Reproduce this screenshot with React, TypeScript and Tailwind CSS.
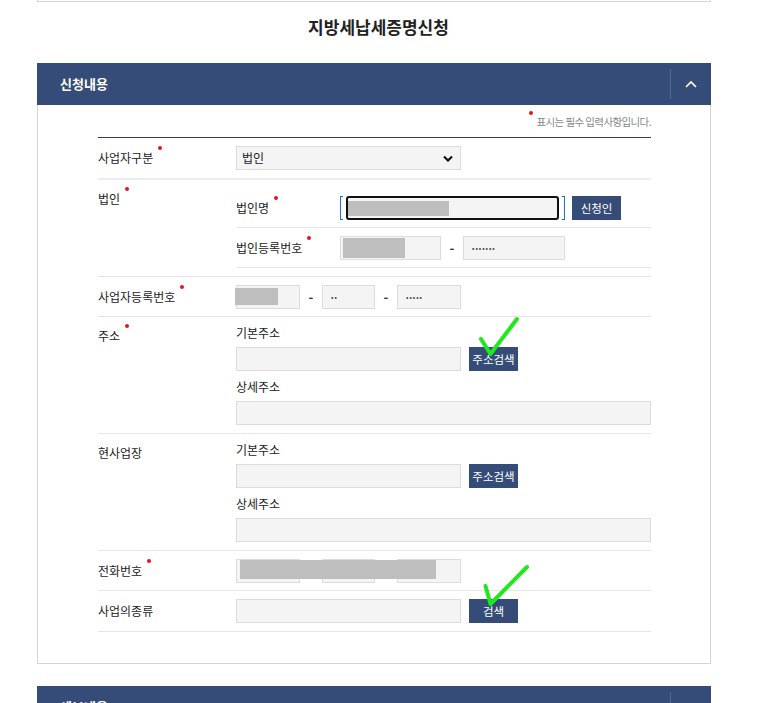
import React from 'react';

const FONT = "font-['Malgun_Gothic','Noto_Sans_CJK_KR',sans-serif]";

function Dot() {
  return <span className="absolute left-[calc(100%+5px)] top-[-4px] h-[4px] w-[4px] rounded-full bg-[#e8141c]" />;
}

function Label({ text, req }: { text: string; req?: boolean }) {
  return (
    <span className="relative inline-block align-top text-[12px] leading-[16px] text-[#222]">
      {text}
      {req && <Dot />}
    </span>
  );
}

function Field({ w, children }: { w: string; children?: React.ReactNode }) {
  return (
    <div className={`relative h-[24px] ${w} border border-[#dcdcdc] bg-[#f4f4f4] flex items-center`}>
      {children}
    </div>
  );
}

function Redact({ className }: { className: string }) {
  return <div className={`absolute bg-[#bebebe] ${className}`} />;
}

function Btn({ text }: { text: string }) {
  return (
    <button className="h-[24px] w-[49px] bg-[#344c77] text-[11.5px] leading-[24px] text-white">{text}</button>
  );
}

function Dots({ n }: { n: number }) {
  return <span className="pl-[8px] text-[7px] tracking-[1px] text-[#444]">{'•'.repeat(n)}</span>;
}

function Dash() {
  return <span className="w-[22px] text-center text-[13px] font-bold text-[#333]">-</span>;
}

function AddressBlock() {
  return (
    <div className="flex-1 pt-[8px] pb-[8px]">
      <div className="h-[16px]"><Label text="기본주소" /></div>
      <div className="mt-[6px] flex items-center gap-[8px]">
        <Field w="w-[225px]" />
        <Btn text="주소검색" />
      </div>
      <div className="mt-[8px] h-[16px]">
        <Label text="상세주소" />
      </div>
      <div className="mt-[6px]">
        <Field w="w-full" />
      </div>
    </div>
  );
}

function Check({ d }: { d: string }) {
  return (
    <path d={d} fill="none" stroke="#1fe81f" strokeWidth="4" strokeLinecap="round" strokeLinejoin="round" />
  );
}

export default function App() {
  return (
    <div className={`relative w-[757px] min-h-[703px] overflow-hidden bg-white leading-[16px] ${FONT}`}>
      <div className="ml-[37px] w-[674px] h-[2px] border-x border-b border-[#d4d4d4]" />
      <h1 className="mt-[14px] w-[757px] text-center text-[17px] font-bold leading-[22px] text-[#222]">지방세납세증명신청</h1>

      {/* 신청내용 */}
      <div className="ml-[37px] mt-[25px] flex h-[42px] w-[674px] items-center bg-[#344c77]">
        <span className="flex-1 pl-[23px] text-[13px] font-bold text-white">신청내용</span>
        <div className="flex h-[30px] w-[41px] items-center justify-center border-l border-[#4f6792]">
          <svg width="12" height="8" viewBox="0 0 12 8">
            <polyline points="1,7 6,2 11,7" fill="none" stroke="#fff" strokeWidth="1.6" />
          </svg>
        </div>
      </div>

      <div className="ml-[37px] h-[559px] w-[674px] border-x border-b border-[#d5d5d5] pl-[60px] pr-[59px]">
        <div className="flex h-[32px] items-start justify-end pt-[10px]">
          <span className="relative text-[10.5px] leading-[14px] tracking-[-0.6px] text-[#888]">
            <span className="absolute left-[-7px] top-[-4px] h-[4px] w-[4px] rounded-full bg-[#e8141c]" />
            표시는 필수 입력사항입니다.
          </span>
        </div>

        <div className="border-t border-[#2e4168]">
          {/* 사업자구분 */}
          <div className="flex h-[42px] items-center border-b-2 border-[#ececec]">
            <div className="w-[138px]"><Label text="사업자구분" req /></div>
            <div className="flex h-[24px] w-[225px] items-center justify-between border border-[#dcdcdc] bg-[#f4f4f4] pl-[5px] pr-[7px]">
              <span className="text-[12px] text-[#222]">법인</span>
              <svg width="10" height="7" viewBox="0 0 10 7">
                <polyline points="1,1.5 5,5.5 9,1.5" fill="none" stroke="#111" strokeWidth="2.2" />
              </svg>
            </div>
          </div>

          {/* 법인 */}
          <div className="flex h-[97px] border-b border-[#e6e6e6]">
            <div className="w-[138px] pt-[11px]"><Label text="법인" req /></div>
            <div className="flex-1 pt-[8px]">
              <div className="flex h-[40px] items-center border-b border-[#e6e6e6]">
                <div className="w-[104px]"><Label text="법인명" req /></div>
                <div className="relative h-[24px] w-[225px]">
                  <div className="absolute inset-y-0 left-0 w-[3px] border-y border-l border-[#1d74c9]" />
                  <div className="absolute inset-y-0 right-0 w-[3px] border-y border-r border-[#1d74c9]" />
                  <div className="relative mx-[6px] h-full rounded-[3px] border-2 border-[#111] bg-[#f4f4f4]">
                    <Redact className="left-0 top-[3px] h-[15px] w-[101px]" />
                  </div>
                </div>
                <div className="ml-[7px]"><Btn text="신청인" /></div>
              </div>
              <div className="flex h-[40px] items-center border-b border-[#e6e6e6]">
                <div className="w-[104px]"><Label text="법인등록번호" req /></div>
                <Field w="w-[101px]">
                  <Redact className="left-[2px] top-[1px] h-[20px] w-[62px]" />
                </Field>
                <Dash />
                <Field w="w-[102px]"><Dots n={7} /></Field>
              </div>
            </div>
          </div>

          {/* 사업자등록번호 */}
          <div className="flex h-[40px] items-center border-b border-[#e6e6e6]">
            <div className="w-[138px]"><Label text="사업자등록번호" req /></div>
            <Field w="w-[64px]">
              <Redact className="left-[-2px] top-[2px] h-[17px] w-[43px]" />
            </Field>
            <Dash />
            <Field w="w-[53px]"><Dots n={2} /></Field>
            <Dash />
            <Field w="w-[64px]"><Dots n={5} /></Field>
          </div>

          {/* 주소 */}
          <div className="flex h-[117px] border-b border-[#e6e6e6]">
            <div className="w-[138px] pt-[11px]"><Label text="주소" req /></div>
            <AddressBlock />
          </div>

          {/* 현사업장 */}
          <div className="flex h-[117px] border-b border-[#e6e6e6]">
            <div className="w-[138px] pt-[11px]"><Label text="현사업장" /></div>
            <AddressBlock />
          </div>

          {/* 전화번호 */}
          <div className="relative flex h-[40px] items-center border-b border-[#e6e6e6]">
            <div className="w-[138px]"><Label text="전화번호" req /></div>
            <Field w="w-[64px]" />
            <span className="w-[22px]" />
            <Field w="w-[53px]" />
            <span className="w-[22px]" />
            <Field w="w-[64px]" />
            <Redact className="left-[142px] top-[9px] h-[19px] w-[196px]" />
          </div>

          {/* 사업의종류 */}
          <div className="flex h-[41px] items-center border-b border-[#e6e6e6]">
            <div className="w-[138px]"><Label text="사업의종류" /></div>
            <Field w="w-[225px]" />
            <div className="ml-[8px]"><Btn text="검색" /></div>
          </div>
        </div>
      </div>

      {/* 다음 섹션 */}
      <div className="ml-[37px] mt-[22px] flex h-[42px] w-[674px] items-center bg-[#344c77]">
        <span className="flex-1 pl-[23px] text-[13px] font-bold text-white">세부내용</span>
        <div className="h-[30px] w-[41px] border-l border-[#4f6792]" />
      </div>

      <svg className="pointer-events-none absolute left-0 top-0" width="757" height="703">
        <Check d="M481 339 L490.5 354 L517 319" />
        <Check d="M485.5 586 L490.5 604 L527 567" />
      </svg>
    </div>
  );
}
